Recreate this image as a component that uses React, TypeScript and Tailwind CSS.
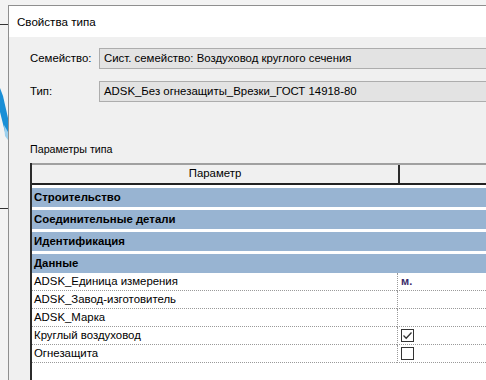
import React from 'react';

const font = { fontFamily: '"Liberation Sans", "Noto Sans", sans-serif' };

function GroupRow({ label }: { label: string }) {
  return (
    <div className="h-[19px] mt-[3px] bg-[#98b4d2] flex items-center pl-[2px] text-[11.4px] font-bold text-black">
      {label}
    </div>
  );
}

function DataRow({ label, value }: { label: string; value?: React.ReactNode }) {
  return (
    <div className="h-[18px] flex bg-white">
      <div className="w-[365px] shrink-0 border-b border-dotted border-[#9a9a9a] flex items-center pl-[2px] text-[11.4px] text-black">
        {label}
      </div>
      <div className="flex-1 border-l border-b border-dotted border-[#9a9a9a] flex items-center pl-[3px] text-[12px]">
        {value}
      </div>
    </div>
  );
}

function Check({ checked }: { checked?: boolean }) {
  return (
    <svg width="13" height="13" viewBox="0 0 13 13" className="block">
      <rect x="0.5" y="0.5" width="12" height="12" fill="#fff" stroke="#333" />
      {checked && <path d="M2.5 6.5 L5.2 9.2 L10.5 3.5" fill="none" stroke="#333" strokeWidth="1.3" />}
    </svg>
  );
}

export default function App() {
  return (
    <div className="w-[486px] h-[380px] overflow-hidden bg-[#f3f3f3] flex" style={font}>
      {/* Revit backdrop strip */}
      <div className="w-[8px] shrink-0 flex flex-col">
        <svg width="8" height="380" viewBox="0 0 8 380">
          <rect x="0" y="24" width="8" height="1" fill="#333" />
          <path d="M0 88 L3 96 L8 118 L8 136 L5 132 L0 112 Z" fill="#1a8fd6" />
          <path d="M4 125 L8 132 L8 140 L5 136 Z" fill="#9cd0ee" />
          <rect x="0" y="208" width="8" height="1" fill="#333" />
        </svg>
      </div>

      {/* Dialog */}
      <div className="flex-1 mt-[5px] border-l border-t border-[#8f8f8f] flex flex-col">
        <div className="h-[31px] bg-white flex items-center pl-[8px] text-[11.6px] text-black">
          Свойства типа
        </div>
        <div className="flex-1 bg-[#f0f0f0] pl-[21px] pt-[11px] flex flex-col">
          <div className="flex items-center h-[21px]">
            <div className="w-[69px] shrink-0 text-[11.4px] text-black">Семейство:</div>
            <div className="flex-1 h-[21px] bg-[#e3e3e3] border border-r-0 border-[#adadad] flex items-center pl-[4px] text-[11.4px] text-black whitespace-nowrap">
              Сист. семейство: Воздуховод круглого сечения
            </div>
          </div>
          <div className="flex items-center h-[21px] mt-[12px]">
            <div className="w-[69px] shrink-0 text-[11.4px] text-black">Тип:</div>
            <div className="flex-1 h-[21px] bg-[#e3e3e3] border border-r-0 border-[#adadad] flex items-center pl-[4px] text-[11.4px] text-black whitespace-nowrap">
              ADSK_Без огнезащиты_Врезки_ГОСТ 14918-80
            </div>
          </div>

          <div className="mt-[40px] text-[10.7px] text-black leading-[14px]">Параметры типа</div>

          {/* Table */}
          <div className="mt-[7px] flex-1 flex flex-col border-l-2 border-[#2b2b2b] bg-white">
            <div className="h-[22px] flex border-t-2 border-[#a0a0a0] border-b-2 border-b-[#222] bg-[#f0f0f0]">
              <div className="w-[366px] shrink-0 flex items-center justify-center text-[11.4px] text-black">
                Параметр
              </div>
              <div className="flex-1 border-l-2 border-[#2b2b2b]" />
            </div>
            <GroupRow label="Строительство" />
            <GroupRow label="Соединительные детали" />
            <GroupRow label="Идентификация" />
            <GroupRow label="Данные" />
            <DataRow label="ADSK_Единица измерения" value={<span className="font-bold text-[#3a2a6a] text-[11px]">м.</span>} />
            <DataRow label="ADSK_Завод-изготовитель" />
            <DataRow label="ADSK_Марка" />
            <DataRow label="Круглый воздуховод" value={<Check checked />} />
            <DataRow label="Огнезащита" value={<Check />} />
          </div>
        </div>
      </div>
    </div>
  );
}
